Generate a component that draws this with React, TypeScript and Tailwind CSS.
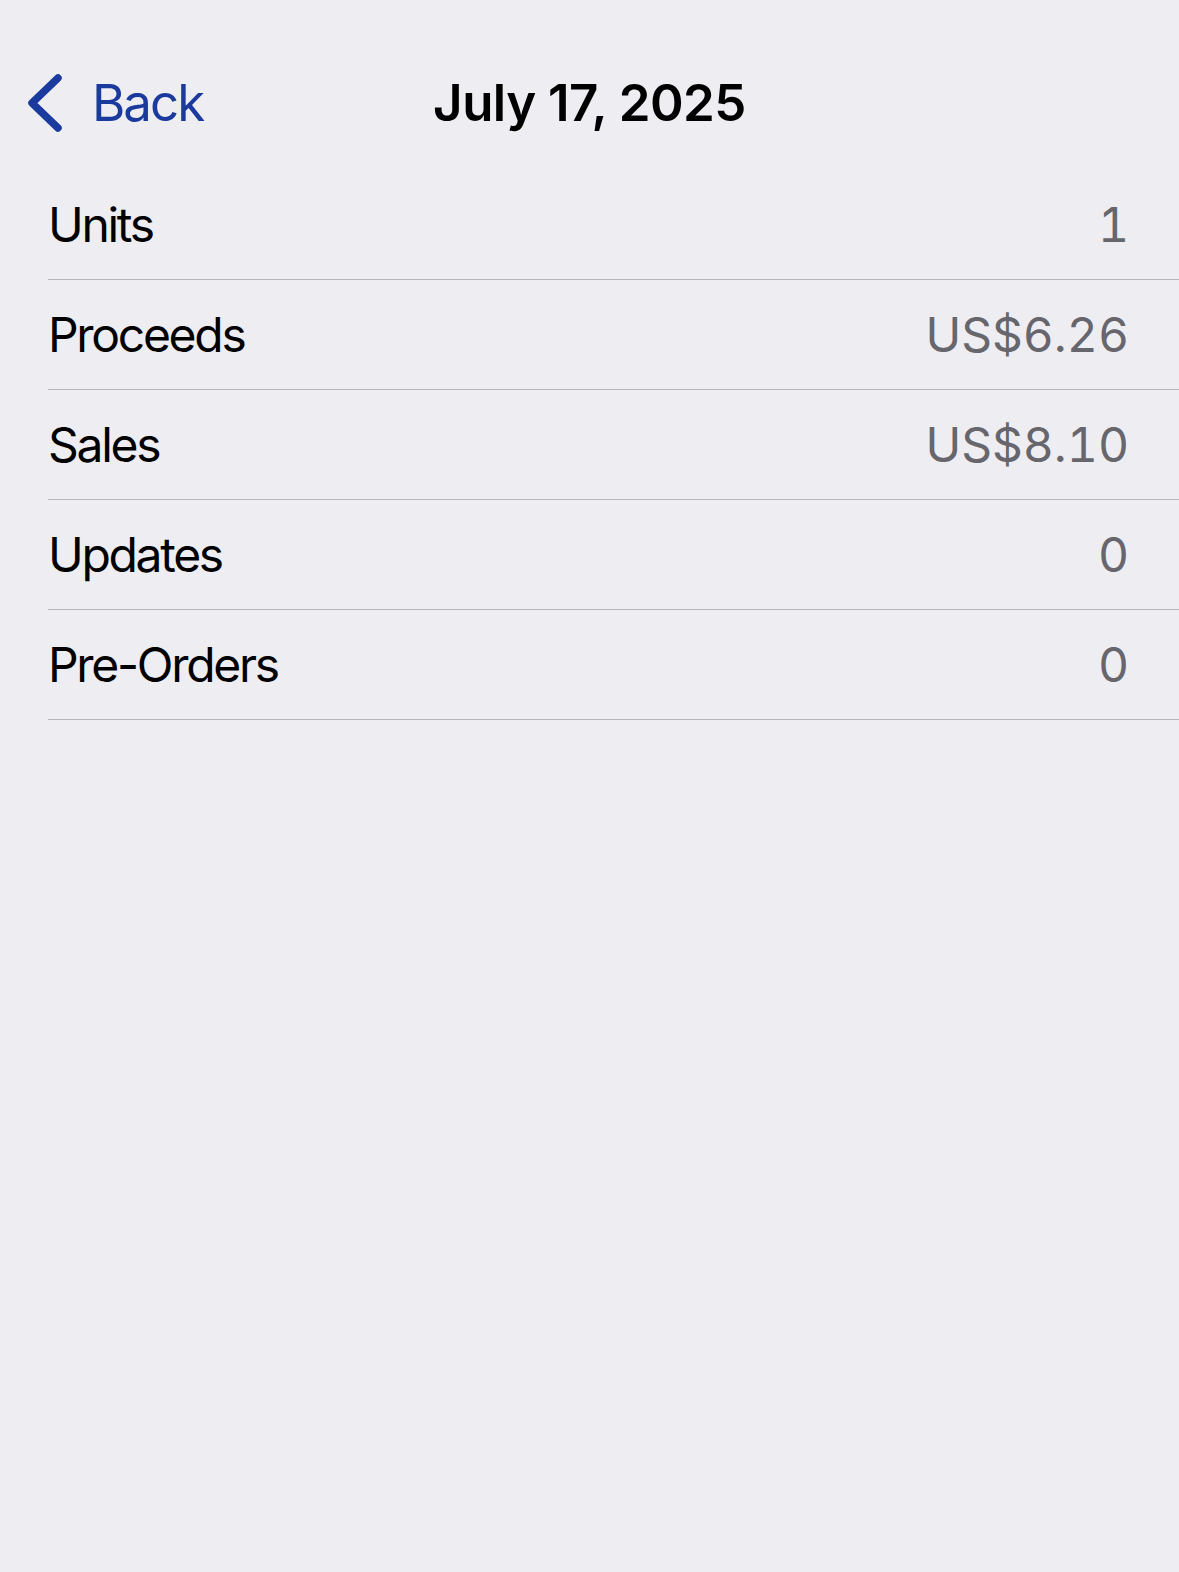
const rows = [
  { label: "Units", value: "1" },
  { label: "Proceeds", value: "US$6.26" },
  { label: "Sales", value: "US$8.10" },
  { label: "Updates", value: "0" },
  { label: "Pre-Orders", value: "0" },
];

const App = () => {
  return (
    <div
      className="min-h-screen bg-[#EDEDF2] text-black"
      style={{ fontFamily: "Inter, 'Noto Sans', sans-serif" }}
    >
      {/* nav bar */}
      <div className="relative pt-[68px] h-[170px]">
        <div className="flex items-center h-[70px] text-[51px] leading-[70px]">
          <button className="flex items-center pl-[26px] text-[#1B3A9E] absolute left-0">
            <svg width="38" height="60" viewBox="0 0 38 60" fill="none">
              <path
                d="M32 5 L6 30 L32 55"
                stroke="#1B3A9E"
                strokeWidth="7.5"
                strokeLinecap="round"
                strokeLinejoin="round"
              />
            </svg>
            <span className="ml-[28px] tracking-[-2px]">Back</span>
          </button>
          <div className="flex-1 text-center font-semibold tracking-[-0.5px]">July 17, 2025</div>
        </div>
      </div>

      {/* rows */}
      <div className="ml-[48px]">
        {rows.map((r) => (
          <div
            key={r.label}
            className="flex items-center justify-between h-[110px] border-b border-[#B6B6BA] pr-[50px] text-[48px]"
          >
            <span className="tracking-[-2.3px]">{r.label}</span>
            <span className="text-[#67666C] tabular-nums">{r.value}</span>
          </div>
        ))}
      </div>
    </div>
  );
};

export default App;
